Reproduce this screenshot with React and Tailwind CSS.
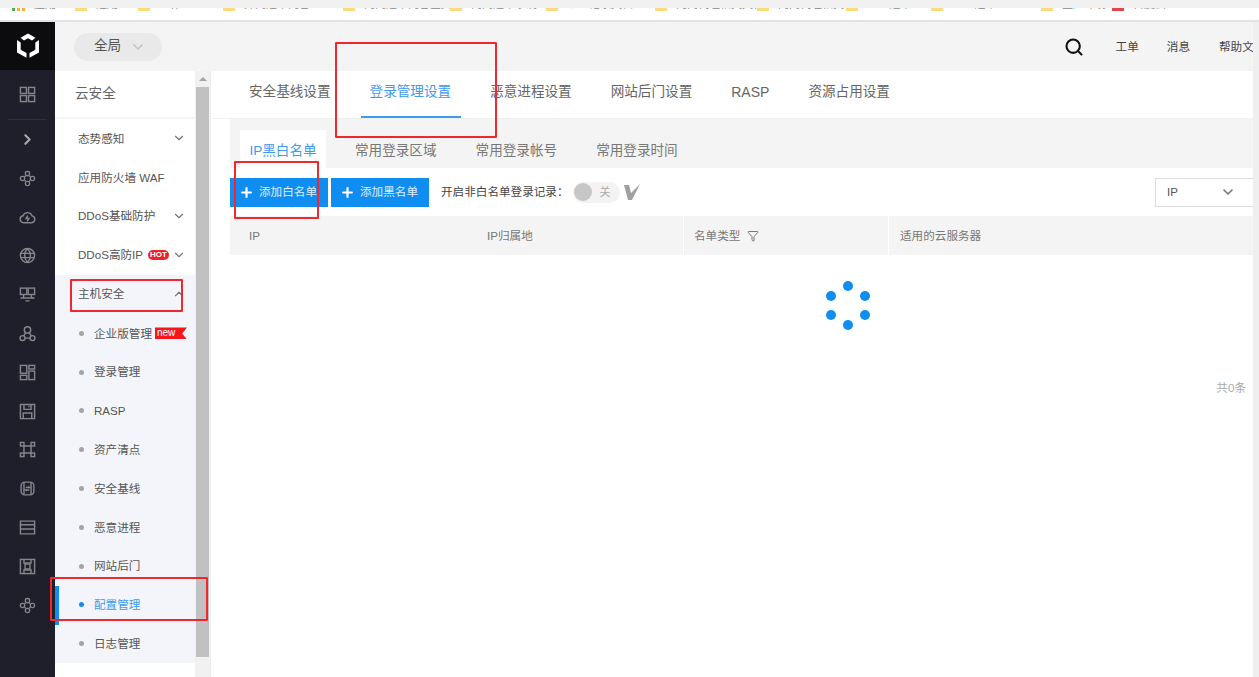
import { ChevronDown, ChevronUp, ChevronRight, Search, Plus, Filter } from 'lucide-react'

const FONT = 'font-["Liberation_Sans","Noto_Sans_CJK_SC",sans-serif]'

const bookmarks = [
  { w: 63, label: '运用' },
  { w: 85, label: '工作' },
  { w: 120, label: '外网运维内容' },
  { w: 107, label: '内网运维内容全文' },
  { w: 96, label: '内网运维系统' },
  { w: 109, label: '个人记录文档' },
  { w: 102, label: '内网代理相关文档' },
  { w: 89, label: '内网代理相关' },
  { w: 85, label: 'linux运维' },
  { w: 110, label: 'linux运维' },
  { w: 71, label: '生产环境' },
  { w: 90, label: '百度云' },
]

const cluster = (
  <g>
    <rect x="9" y="2" width="6" height="6" rx="2.500" />
    <rect x="9" y="16" width="6" height="6" rx="2.500" />
    <rect x="2" y="9" width="6" height="6" rx="2.500" />
    <rect x="16" y="9" width="6" height="6" rx="2.500" />
    <path d="M8 9.500L9.500 8M14.500 8L16 9.500M16 14.500L14.500 16M9.500 16L8 14.500" />
  </g>
)

const railIcons = [
  cluster,
  <g key="c"><path d="M6.500 19.500a5 5 0 0 1-.8-9.900A6.800 6.800 0 0 1 18.500 9.700a5 5 0 0 1-.5 9.800z" /><path d="M12.500 9.500l-2.500 4h4l-2.500 4" /></g>,
  <g key="d"><circle cx="12" cy="12" r="10" /><path d="M2 9h20M2 15h20M12 2c-5.500 6-5.500 14 0 20M12 2c5.500 6 5.500 14 0 20" /></g>,
  <g key="e"><rect x="2" y="3" width="9" height="9" /><rect x="13" y="3" width="9" height="9" /><path d="M6.500 12v5M17.500 12v5M2 17h20M9 21h6" /></g>,
  <g key="f"><circle cx="12" cy="7" r="4.500" /><circle cx="5" cy="18.500" r="3.500" /><circle cx="19" cy="18.500" r="3.500" /><path d="M8.500 18.500h7M9.500 11l-3 4.500M14.500 11l3 4.500" /></g>,
  <g key="g"><rect x="2" y="2" width="9" height="11" /><rect x="14" y="2" width="8" height="5" /><rect x="2" y="16" width="9" height="6" /><rect x="14" y="10" width="8" height="12" /></g>,
  <g key="h"><path d="M2 2h20v20H2z" /><path d="M7 2v7h10V2M6 22v-8h12v8M13 5h2" /></g>,
  <g key="i"><path d="M7 7h10v10H7z" /><rect x="2" y="2" width="5" height="5" /><rect x="17" y="2" width="5" height="5" /><rect x="2" y="17" width="5" height="5" /><rect x="17" y="17" width="5" height="5" /></g>,
  <g key="j"><rect x="3" y="3" width="18" height="18" rx="5" /><path d="M7 3v18M17 3v18M9.500 10.500h5l-1.500-1.500M14.500 14h-5l1.500 1.500" /></g>,
  <g key="k"><path d="M2 3h20v5H2zM2 8h20v6H2zM2 14h20v7H2z" /></g>,
  <g key="l"><rect x="2" y="2" width="20" height="20" /><path d="M7 2v5h10V2M7 22v-5h10v5" /><rect x="8.500" y="8.500" width="7" height="7" /></g>,
  cluster,
]

const subItems = ['企业版管理', '登录管理', 'RASP', '资产清点', '安全基线', '恶意进程', '网站后门', '配置管理', '日志管理']

const RailIcon = ({ children }) => (
  <div className="w-full h-[38.800px] shrink-0 flex items-center justify-center">
    <svg width="17" height="17" viewBox="0 0 24 24" fill="none" stroke="#85868c" strokeWidth="2">
      {children}
    </svg>
  </div>
)

const Rail = () => (
  <div className="w-[55px] shrink-0 bg-[#1e1f2a] flex flex-col items-center">
    <div className="w-full h-[48px] shrink-0 bg-[#0c0c0e] flex items-center justify-center">
      <svg width="24" height="26" viewBox="0 0 24 26" fill="#fff">
        <path d="M12 0.500l7.500 4.300-3.500 2.700-4-2.300-4 2.300-3.500-2.700z" />
        <path d="M1 7l3.700 2.600v7.200l5.800 3.300v4.700L1 19.500z" />
        <path d="M23 7l-3.700 2.600v7.200l-5.800 3.300v4.700l9.500-5.300z" />
      </svg>
    </div>
    <div className="w-full h-[49px] shrink-0 flex items-center justify-center">
      <svg width="17" height="17" viewBox="0 0 24 24" fill="none" stroke="#85868c" strokeWidth="2">
        <rect x="2" y="2" width="8.500" height="8.500" /><rect x="13.500" y="2" width="8.500" height="8.500" />
        <rect x="2" y="13.500" width="8.500" height="8.500" /><rect x="13.500" y="13.500" width="8.500" height="8.500" />
      </svg>
    </div>
    <div className="w-[39px] h-px shrink-0 bg-[#2f303b]" />
    <div className="w-full h-[39px] shrink-0 flex items-center justify-center">
      <ChevronRight size={17} color="#a9a9ad" strokeWidth={3} />
    </div>
    {railIcons.map((icon, i) => (
      <RailIcon key={i}>{icon}</RailIcon>
    ))}
  </div>
)

const NavRow = ({ label, badge, chevron }) => (
  <div className="h-[38.800px] shrink-0 flex items-center pl-[23px] pr-[9px] text-[11.600px] text-[#555]">
    <span className="whitespace-nowrap">{label}</span>
    {badge}
    {chevron === 'down' && <ChevronDown size={14} color="#777" className="ml-auto" />}
    {chevron === 'up' && <ChevronUp size={14} color="#777" className="ml-auto" />}
  </div>
)

const Sidebar = () => (
  <div className="w-[156px] shrink-0 flex border-r border-[#eeeeee] overflow-hidden">
    <div className="w-[140px] shrink-0 flex flex-col">
      <div className="h-[48px] shrink-0 flex items-center pt-[1px] pl-[20px] text-[13.600px] text-[#666] border-b-2 border-[#f4f4f4]">云安全</div>
      <div>
        <NavRow label="态势感知" chevron="down" />
        <NavRow label="应用防火墙 WAF" />
        <NavRow label="DDoS基础防护" chevron="down" />
        <NavRow
          label="DDoS高防IP"
          chevron="down"
          badge={<span className="ml-[5px] h-[10px] px-[2px] rounded-full bg-[#f0202a] text-white text-[8px] leading-[10px] font-bold">HOT</span>}
        />
      </div>
      <div className="mt-px bg-[#f4f5fa]">
        <div className="-mt-px mb-px">
          <NavRow label="主机安全" chevron="up" />
        </div>
        {subItems.map((item) => {
          const active = item === '配置管理'
          return (
            <div key={item} className="relative h-[38.800px] flex items-center pl-[24px] text-[11.600px]">
              {active && <div className="absolute left-0 top-0 bottom-[-1px] w-[4px] bg-[#0f8df0]" />}
              <span className={`w-[5px] h-[5px] rounded-full mr-[10px] ${active ? 'bg-[#0f8df0]' : 'bg-[#a5a5a5]'}`} />
              <span className={active ? 'text-[#3e9bee]' : 'text-[#555]'}>{item}</span>
              {item === '企业版管理' && (
                <span className="ml-[3px] w-[32px] h-[12px] bg-[#f5161c] text-white text-[10px] leading-[11px] pl-[2px] [clip-path:polygon(0_0,100%_0,85%_50%,100%_100%,0_100%)]">new</span>
              )}
            </div>
          )
        })}
      </div>
    </div>
    <div className="w-[15px] shrink-0 bg-[#f1f1f1] flex flex-col">
      <div className="h-[16px] flex items-center justify-center">
        <div className="w-0 h-0 border-x-[4px] border-x-transparent border-b-[4px] border-b-[#a3a3a3]" />
      </div>
      <div className="h-[570px] mx-[1px] bg-[#c1c1c1]" />
    </div>
  </div>
)

const Spinner = () => (
  <svg width="44" height="50" viewBox="0 0 44 50" fill="#0f8df0">
    <circle cx="22" cy="5" r="5" />
    <circle cx="5" cy="15" r="5" />
    <circle cx="39" cy="15" r="5" />
    <circle cx="5" cy="34" r="5" />
    <circle cx="39" cy="34" r="5" />
    <circle cx="22" cy="44" r="5" />
  </svg>
)

const Content = () => (
  <div className="flex-1 min-w-0 flex flex-col bg-white">
    <div className="h-[48px] shrink-0 flex pl-[38px] gap-[39px] text-[13.600px] text-[#666] border-b border-[#f0f0f0]">
      {['安全基线设置', '登录管理设置', '恶意进程设置', '网站后门设置', 'RASP', '资源占用设置'].map((t, i) => (
        <div key={t} className={`relative flex items-center pb-[4px] whitespace-nowrap ${i === 1 ? 'text-[#3e9bee]' : ''} ${t === 'RASP' ? 'text-[14px]' : ''}`}>
          {t}
          {i === 1 && <div className="absolute left-[-9px] right-[-10px] bottom-0 h-[2px] bg-[#3e9bee]" />}
        </div>
      ))}
    </div>
    <div className="ml-[19px] h-[49px] shrink-0 bg-[#f4f4f4] flex items-end pl-[10px] text-[13.600px] text-[#777]">
      <div className="w-[86px] h-[38px] pt-[5px] bg-white text-[#3e9bee] flex items-center justify-center whitespace-nowrap">IP黑白名单</div>
      <div className="flex gap-[39px] pl-[29px] pt-[5px] h-[38px] items-center whitespace-nowrap">
        <span>常用登录区域</span>
        <span>常用登录帐号</span>
        <span>常用登录时间</span>
      </div>
    </div>
    <div className="ml-[19px] h-[48px] shrink-0 flex items-center gap-[3px]">
      {['添加白名单', '添加黑名单'].map((t) => (
        <button key={t} className="w-[98px] h-[29px] bg-[#0f8df0] text-white/85 text-[11.600px] flex items-center justify-center gap-[5px] pr-[2px]">
          <Plus size={15} color="#fff" strokeWidth={3.500} />
          {t}
        </button>
      ))}
      <span className="ml-[9px] text-[11.600px] text-[#444] whitespace-nowrap">开启非白名单登录记录：</span>
      <div className="ml-px w-[47px] h-[21px] rounded-full bg-[#f3f3f3] flex items-center pl-[1px]">
        <span className="w-[18px] h-[18px] rounded-full bg-[#c6c6c6]" />
        <span className="ml-[8px] text-[11px] text-[#aaa]">关</span>
      </div>
      <svg className="ml-[1px]" width="17" height="16" viewBox="0 0 17 16" fill="#a0a0a0">
        <path d="M0 1h5l2 8 9-9-8 16H4z" />
      </svg>
      <div className="ml-auto w-[98px] h-[29px] border border-r-0 border-[#dddddd] flex items-center justify-between pl-[11px] pr-[17px] text-[11.600px] text-[#555]">
        IP
        <ChevronDown size={16} color="#777" strokeWidth={2.500} />
      </div>
    </div>
    <div className="ml-[19px] h-[39px] shrink-0 bg-[#f4f4f4] flex text-[11.600px] text-[#777]">
      <div className="w-[237px] pl-[19px] flex items-center">IP</div>
      <div className="w-[217px] pl-[20px] flex items-center border-r border-white">IP归属地</div>
      <div className="w-[205px] pl-[10px] flex items-center gap-[7px] border-r border-white">
        名单类型
        <Filter size={12} color="#777" />
      </div>
      <div className="pl-[11px] flex items-center">适用的云服务器</div>
    </div>
    <div className="h-[26px] shrink-0" />
    <div className="flex justify-center pl-[237px]">
      <div className="mr-[5px]"><Spinner /></div>
    </div>
    <div className="mt-[48px] pr-[7px] text-right text-[11.600px] text-[#aaa]">共0条</div>
  </div>
)

export default function App() {
  return (
    <div className={`${FONT} w-full h-[677px] overflow-hidden flex flex-col bg-white relative`}>
      <div className="h-[8px] shrink-0 bg-[#f1f1f1]" />
      <div className="h-[12px] shrink-0 bg-white flex overflow-hidden pr-[6px]">
        <div className="w-[75px] shrink-0 flex items-start overflow-hidden pl-[12px] gap-[1px]">
          <span className="w-[3px] h-[2.500px] bg-[#4caf50]" />
          <span className="w-[3px] h-[2.500px] ml-[1px] bg-[#f5b335]" />
          <span className="w-[3px] h-[2.500px] ml-[1px] bg-[#f5b335]" />
          <span className="ml-[8px] text-[11px] leading-[11px] mt-[-9px] text-[#888] whitespace-nowrap">应用</span>
        </div>
        {bookmarks.map((b, i) => (
          <div key={i} style={{ width: b.w }} className="shrink-0 flex items-start gap-[9px] overflow-hidden">
            <span className={`w-[12px] h-[2.500px] shrink-0 ${i === 11 ? 'bg-[#e8414a]' : 'bg-[#fbdc7c]'}`} />
            <span className="text-[11px] leading-[11px] mt-[-9px] text-[#888] whitespace-nowrap">{b.label}</span>
          </div>
        ))}
      </div>
      <div className="h-[2px] shrink-0 bg-[#e2e2e6]" />
      <div className="flex-1 min-h-0 flex">
        <Rail />
        <div className="flex-1 min-w-0 flex flex-col">
          <div className="h-[49px] shrink-0 bg-[#f4f4f4] flex items-center pl-[19px]">
            <div className="w-[88px] h-[28px] rounded-full bg-[#e9e9e9] flex items-center gap-[9px] pl-[20px] text-[13.600px] text-[#555]">
              全局
              <ChevronDown size={16} color="#c4c4c4" strokeWidth={2.500} />
            </div>
            <Search size={20} color="#111" strokeWidth={2.500} className="ml-auto" />
            <span className="ml-[32px] text-[11.600px] text-[#444]">工单</span>
            <span className="ml-[28px] text-[11.600px] text-[#444]">消息</span>
            <span className="ml-[29px] w-[34px] text-[11.600px] text-[#444] whitespace-nowrap overflow-hidden">帮助文档</span>
          </div>
          <div className="flex-1 min-h-0 flex">
            <Sidebar />
            <Content />
          </div>
        </div>
        <div className="w-[6px] shrink-0 bg-[#efefef]" />
      </div>
      {/* 截图上的红色标注框 */}
      <div className="absolute left-[335px] top-[42px] w-[162px] h-[96px] border-2 border-[#f0282d] rounded-[1px]" />
      <div className="absolute left-[234px] top-[161px] w-[85px] h-[58px] border-2 border-[#f0282d] rounded-[1px]" />
      <div className="absolute left-[70px] top-[279px] w-[113px] h-[33px] border-2 border-[#f0282d] rounded-[1px]" />
      <div className="absolute left-[50px] top-[577px] w-[158px] h-[44px] border-2 border-[#f0282d] rounded-[1px]" />
    </div>
  )
}
